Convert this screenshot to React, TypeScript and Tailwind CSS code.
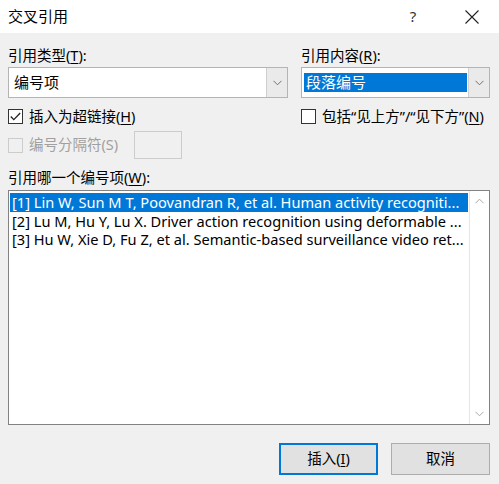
import React from "react";

const U = ({ c }: { c: string }) => <span className="underline underline-offset-2">{c}</span>;

const Chevron = ({ up = false, color = "#606060" }: { up?: boolean; color?: string }) => (
  <svg width="9" height="6" viewBox="0 0 9 6" className={up ? "rotate-180" : ""}>
    <path d="M0.5 0.8 L4.5 4.8 L8.5 0.8" fill="none" stroke={color} strokeWidth="1" />
  </svg>
);

const Combo = ({ text, selected = false }: { text: string; selected?: boolean }) => (
  <div className="h-[31px] flex border border-[#b4b4b4] bg-white">
    <div className="flex-1 flex items-center pl-[2px] pr-[1px]">
      <div
        className={
          "h-[19px] w-full flex items-center pl-[2px] text-[15px] leading-none " +
          (selected ? "bg-[#0078d7] text-white" : "text-black pl-[3px]")
        }
      >
        {text}
      </div>
    </div>
    <div className="w-[21px] bg-[#eaeaea] border-l border-[#cfcfcf] flex items-center justify-center">
      <Chevron color="#707070" />
    </div>
  </div>
);

const Check = ({ checked = false, disabled = false }: { checked?: boolean; disabled?: boolean }) => (
  <div
    className={
      "w-[15px] h-[15px] border flex items-center justify-center shrink-0 " +
      (disabled ? "border-[#cccccc] bg-[#f0f0f0]" : "border-[#333333] bg-white")
    }
  >
    {checked && (
      <svg width="11" height="9" viewBox="0 0 11 9">
        <path d="M0.8 4.5 L3.8 7.6 L10.2 1" fill="none" stroke="#222" strokeWidth="1.3" />
      </svg>
    )}
  </div>
);

const rows = [
  "[1] Lin W, Sun M T, Poovandran R, et al. Human activity recogniti...",
  "[2] Lu M, Hu Y, Lu X. Driver action recognition using deformable ...",
  "[3] Hu W, Xie D, Fu Z, et al. Semantic-based surveillance video ret...",
];

export default function App() {
  return (
    <div
      className="w-[499px] h-[484px] bg-[#f0f0f0] flex flex-col text-black overflow-hidden"
      style={{ fontFamily: '"Noto Sans", "Noto Sans CJK SC", sans-serif' }}
    >
      <div className="h-[33px] bg-white flex items-center shrink-0">
        <div className="pl-[8px] text-[15px] flex-1">交叉引用</div>
        <div className="w-[30px] text-[15px] text-[#333] flex justify-center mr-[37px]">?</div>
        <div className="mr-[20px] flex items-center">
          <svg width="14" height="14" viewBox="0 0 14 14">
            <path d="M0.5 0.5 L13.5 13.5 M13.5 0.5 L0.5 13.5" stroke="#222" strokeWidth="1.1" />
          </svg>
        </div>
      </div>

      <div className="pl-[8px] pr-[9px] flex flex-col">
        <div className="flex gap-[13px] pt-[12px]">
          <div className="w-[280px] flex flex-col">
            <div className="text-[14.5px] h-[20px] leading-[20px]">
              引用类型(<U c="T" />):
            </div>
            <div className="mt-[2px]">
              <Combo text="编号项" />
            </div>
            <div className="flex items-center gap-[6px] mt-[10px] h-[17px] text-[14.5px]">
              <Check checked />
              <span>
                插入为超链接(<U c="H" />)
              </span>
            </div>
            <div className="flex items-center mt-[6px] h-[28px] text-[14.5px]">
              <Check disabled />
              <span className="ml-[6px] text-[#a0a0a0]">编号分隔符(S)</span>
              <div className="ml-[16px] w-[48px] h-[28px] border border-[#cccccc] bg-[#f0f0f0]" />
            </div>
          </div>
          <div className="w-[189px] flex flex-col">
            <div className="text-[14.5px] h-[20px] leading-[20px]">
              引用内容(<U c="R" />):
            </div>
            <div className="mt-[2px]">
              <Combo text="段落编号" selected />
            </div>
            <div className="flex items-center gap-[6px] mt-[10px] h-[17px] text-[14.5px] whitespace-nowrap">
              <Check />
              <span>
                包括“见上方”/“见下方”(<U c="N" />)
              </span>
            </div>
          </div>
        </div>

        <div className="text-[14.5px] h-[20px] leading-[20px] mt-[8px]">
          引用哪一个编号项(<U c="W" />):
        </div>
        <div className="mt-[3px] h-[235px] border border-[#828282] bg-white flex">
          <div className="flex-1 min-w-0 pt-[2px] pl-[1px] pr-[1px]">
            {rows.map((r, i) => (
              <div
                key={i}
                className={
                  "h-[18.5px] leading-[18.5px] pl-[2px] text-[14.6px] whitespace-nowrap " +
                  (i === 0 ? "bg-[#0078d7] text-white" : "")
                }
              >
                {r}
              </div>
            ))}
          </div>
          <div className="w-[20px] shrink-0 border-l border-[#e6e6e6] bg-white flex flex-col justify-between items-center py-[7px]">
            <Chevron up color="#a8a8a8" />
            <Chevron color="#a8a8a8" />
          </div>
        </div>

        <div className="flex justify-end gap-[13px] mt-[18px]">
          <button className="w-[99px] h-[32px] bg-[#e1e1e1] border-[2px] border-[#0078d7] text-[14.5px]">
            插入(<U c="I" />)
          </button>
          <button className="w-[99px] h-[32px] bg-[#e1e1e1] border border-[#adadad] text-[14.5px]">
            取消
          </button>
        </div>
      </div>
    </div>
  );
}
